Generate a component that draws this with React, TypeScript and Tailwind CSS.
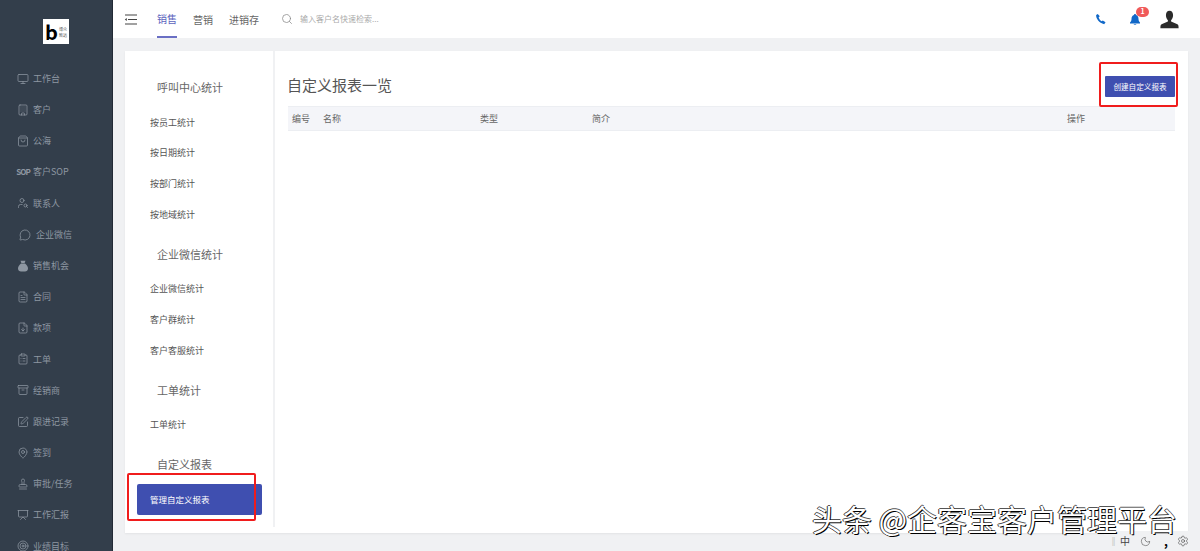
import {
  Archive,
  Building,
  ClipboardList,
  FileDown,
  FileText,
  MessageCircle,
  Monitor,
  Moon,
  Presentation,
  Search,
  Settings,
  ShoppingBag,
  SquarePen,
  Stamp,
  Target,
  UserSearch,
  MapPin,
} from "lucide-react";
import type { ReactNode } from "react";

const iconProps = { size: 12, strokeWidth: 1.5 };

function MoneyBag() {
  return (
    <svg width="12" height="12" viewBox="0 0 12 12" fill="currentColor">
      <path d="M3.5 0.8h5L7.6 3H4.4zM4 3.6h4C10 5 11 7 11 8.6 11 10.6 9.6 11.4 8 11.4H4C2.400 11.4 1 10.600 1 8.600 1 7 2 5 4 3.600z" />
    </svg>
  );
}

const sideItems: { label: string; icon: ReactNode; indent?: boolean }[] = [
  { label: "工作台", icon: <Monitor {...iconProps} /> },
  { label: "客户", icon: <Building {...iconProps} /> },
  { label: "公海", icon: <ShoppingBag {...iconProps} /> },
  {
    label: "客户SOP",
    icon: <span className="text-[8px] font-bold tracking-[-1px]">SOP</span>,
  },
  { label: "联系人", icon: <UserSearch {...iconProps} /> },
  { label: "企业微信", icon: <MessageCircle {...iconProps} />, indent: true },
  { label: "销售机会", icon: <MoneyBag /> },
  { label: "合同", icon: <FileText {...iconProps} /> },
  { label: "款项", icon: <FileDown {...iconProps} /> },
  { label: "工单", icon: <ClipboardList {...iconProps} /> },
  { label: "经销商", icon: <Archive {...iconProps} /> },
  { label: "跟进记录", icon: <SquarePen {...iconProps} /> },
  { label: "签到", icon: <MapPin {...iconProps} /> },
  { label: "审批/任务", icon: <Stamp {...iconProps} /> },
  { label: "工作汇报", icon: <Presentation {...iconProps} /> },
  { label: "业绩目标", icon: <Target {...iconProps} /> },
];

const navGroups = [
  { title: "呼叫中心统计", items: ["按员工统计", "按日期统计", "按部门统计", "按地域统计"] },
  { title: "企业微信统计", items: ["企业微信统计", "客户群统计", "客户客服统计"] },
  { title: "工单统计", items: ["工单统计"] },
];

function Sidebar() {
  return (
    <aside className="flex h-full w-[113px] shrink-0 flex-col overflow-hidden border-r border-[#222a35] bg-[#333e4b]">
      <div className="mt-[19px] ml-[43px] flex h-[25px] w-[26px] shrink-0 items-center gap-px bg-white pl-[2px]">
        <span className="text-[20px] leading-none font-bold text-black">b</span>
        <span className="flex flex-col text-[4px] leading-[6px] text-[#555]">
          <span>博众</span>
          <span>致远</span>
        </span>
      </div>
      <nav className="mt-[19px] flex flex-col">
        {sideItems.map((item) => (
          <div
            key={item.label}
            className={`flex h-[31.2px] shrink-0 items-center gap-[4px] text-[9px] text-[#8e97a2] ${
              item.indent ? "pl-[19px]" : "pl-[17px]"
            }`}
          >
            <span className="flex w-[12px] items-center justify-center">{item.icon}</span>
            <span className={item.indent ? "ml-[1px]" : ""}>{item.label}</span>
          </div>
        ))}
      </nav>
    </aside>
  );
}

function Topbar() {
  return (
    <header className="flex h-[38px] shrink-0 items-center bg-white pl-[11px]">
      <svg width="13" height="11" viewBox="0 0 13 11" fill="none" stroke="#444" strokeWidth="1.2">
        <path d="M1 1h12M4 5.500h9M1 10h12" />
        <path d="M2.800 4 .8 5.500l2 1.500z" fill="#444" stroke="none" />
      </svg>
      <div className="ml-[20px] flex h-full gap-[16px] text-[10px] text-[#666]">
        <span className="flex h-full items-center border-b-2 border-[#6a6fc4] text-[#5c63bd]">销售</span>
        <span className="flex h-full items-center">营销</span>
        <span className="flex h-full items-center">进销存</span>
      </div>
      <Search size={12} strokeWidth={1.5} className="ml-[22px] text-[#888]" />
      <span className="ml-[7px] text-[8px] text-[#aaa]">输入客户名快速检索...</span>
      <div className="ml-auto flex items-center pr-[21px]">
        <svg width="11" height="12" viewBox="0 0 24 24" fill="#1168c8">
          <path d="M6 1 2.500 3.500C1.800 11 9 21 20 23.500l3-4.500-6-4-2.500 2C11 15 8.500 11 8 8l2.500-2z" />
        </svg>
        <div className="relative ml-[23px]">
          <svg width="12" height="13" viewBox="0 0 24 24" fill="#1168c8">
            <path d="M12 1c-1.500 0-2 1-2 2C6.500 4 5 7 5 11c0 3-1 5-3 7v2h20v-2c-2-2-3-4-3-7 0-4-1.500-7-5-8 0-1-.5-2-2-2zM9 21.500c.5 1 1.500 1.500 3 1.500s2.500-.5 3-1.500z" />
          </svg>
          <span className="absolute top-[-6px] left-[7px] flex h-[10px] w-[13px] items-center justify-center rounded-full bg-[#f05a5a] text-[7px] font-bold text-white">
            1
          </span>
        </div>
        <svg width="19" height="19" viewBox="0 0 24 24" fill="#2b2b2b" className="ml-[19px]">
          <path d="M12 1c-3 0-4.500 2.500-4.500 5.500 0 2.500 1 5 2.500 6.500v1.500L2 18c-1 .5-1.500 1.500-1.500 5h23c0-3.500-.5-4.500-1.500-5l-8-3.500V13c1.500-1.500 2.500-4 2.500-6.500C16.500 3.500 15 1 12 1z" />
        </svg>
      </div>
    </header>
  );
}

function LeftNav() {
  return (
    <div className="mb-[6px] w-[150px] shrink-0 border-r-[2px] border-[#f0f1f3] pt-[21px]">
      {navGroups.map((group) => (
        <div key={group.title} className="mb-[9px]">
          <h3 className="mb-[5px] flex h-[30px] items-center pl-[32px] text-[11px] font-normal text-[#666]">
            {group.title}
          </h3>
          {group.items.map((item) => (
            <div key={item} className="flex h-[30.7px] items-center pl-[25px] text-[9px] text-[#555]">
              {item}
            </div>
          ))}
        </div>
      ))}
      <h3 className="mb-[4px] flex h-[30px] items-center pl-[32px] text-[11px] font-normal text-[#666]">
        自定义报表
      </h3>
      <div className="relative ml-[12px] flex h-[31px] w-[125px] items-center rounded-[2px] bg-[#3f4fb0] pl-[13px] text-[8.500px] text-white">
        管理自定义报表
        <div className="absolute top-[-11px] left-[-10px] h-[48px] w-[129px] rounded-[2px] border-2 border-[#f01c1c]" />
      </div>
    </div>
  );
}

function ReportPanel() {
  return (
    <section className="min-w-0 flex-1 pr-[13px] pl-[13px]">
      <div className="flex h-[55px] items-start justify-between">
        <h1 className="mt-[22px] ml-[-1px] text-[15px] leading-[24px] font-normal text-[#555]">自定义报表一览</h1>
        <button
          type="button"
          className="relative mt-[25px] flex h-[21px] w-[70px] items-center justify-center rounded-[1px] bg-[#3f4fb0] text-[7.600px] text-white"
        >
          创建自定义报表
          <span className="absolute top-[-14px] left-[-6px] h-[45px] w-[79px] rounded-[2px] border-2 border-[#f01c1c]" />
        </button>
      </div>
      <div className="flex h-[25px] items-center border-y border-[#eceef2] bg-[#f4f5f9] text-[9px] text-[#666]">
        <span className="ml-[4px] w-[31px]">编号</span>
        <span className="w-[157px]">名称</span>
        <span className="w-[112px]">类型</span>
        <span className="w-[475px]">简介</span>
        <span>操作</span>
      </div>
    </section>
  );
}

export default function App() {
  return (
    <div className="relative flex h-[551px] w-[1200px] overflow-hidden bg-[#f0f1f3] font-['Noto_Sans_CJK_SC','Noto_Sans',sans-serif]">
      <Sidebar />
      <div className="flex min-w-0 flex-1 flex-col">
        <Topbar />
        <main className="mt-[13px] mr-[12px] ml-[12px] flex h-[482px] bg-white shadow-[0_1px_2px_rgba(0,0,0,0.06)]">
          <LeftNav />
          <ReportPanel />
        </main>
      </div>
      <div className="absolute top-[531px] right-0 flex h-[20px] w-[96px] items-center bg-[#f0f1f3] pl-[5px] text-[#444]">
        <span className="text-[9px] leading-none text-[#999]">‖</span>
        <span className="ml-[2px] text-[10px] leading-none">中</span>
        <Moon size={11} strokeWidth={1.2} className="ml-[10px]" />
        <span className="ml-[13px] text-[12px] leading-none font-bold text-black">,</span>
        <Settings size={12} strokeWidth={1.2} className="ml-[9px]" />
      </div>
      <div className="absolute top-[505px] left-[812px] text-[30px] leading-[26px] whitespace-nowrap text-white [text-shadow:1px_1px_0_#000,-1px_0_0_#333,0_-1px_0_#555]">
        头条 @企客宝客户管理平台
      </div>
    </div>
  );
}
